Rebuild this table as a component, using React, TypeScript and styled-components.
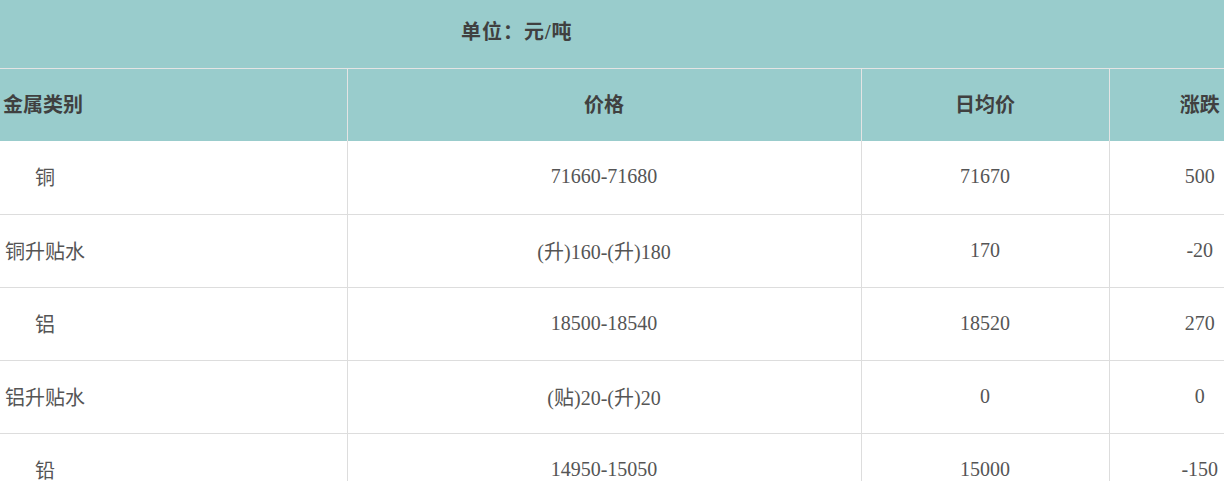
import styled, { createGlobalStyle } from "styled-components";

const GlobalStyle = createGlobalStyle`
  html, body {
    margin: 0;
    padding: 0;
    background: #ffffff;
    overflow: hidden;
  }
`;

const teal = "#99cccc";
const line = "#dddddd";

const PriceTable = styled.table`
  width: 1290px;
  table-layout: fixed;
  border-collapse: collapse;
  font-family: "Liberation Serif", "Noto Sans CJK SC", serif;
  font-size: 20px;
  color: #555555;
`;

const TitleRow = styled.tr`
  background: ${teal};
  border-bottom: 1px solid #e4e4e4;
`;

const TitleCell = styled.td`
  height: 68px;
  box-sizing: border-box;
  padding: 0 0 7px 461px;
  font-weight: bold;
  color: #404040;
  text-align: left;
  letter-spacing: 1px;
`;

const HeadRow = styled.tr`
  background: ${teal};
`;

const HeadCell = styled.th<{ $align?: "left" | "center" }>`
  height: 73px;
  box-sizing: border-box;
  padding: 0 0 2px;
  padding-left: ${(p) => (p.$align === "left" ? "3px" : "0")};
  text-align: ${(p) => p.$align ?? "center"};
  font-weight: bold;
  color: #404040;
  border-left: 1px solid #e4e4e4;

  &:first-child {
    border-left: none;
  }
`;

const BodyRow = styled.tr`
  border-bottom: 1px solid ${line};
`;

const Cell = styled.td`
  height: 73px;
  box-sizing: border-box;
  padding: 0 0 1px;
  text-align: center;
  border-left: 1px solid ${line};

  &:first-child {
    border-left: none;
  }
`;

const NameBox = styled.span`
  display: inline-block;
  width: 90px;
  text-align: center;
`;

const NameCell = styled(Cell)`
  text-align: left;
`;

const rows = [
  { name: "铜", price: "71660-71680", avg: "71670", change: "500" },
  { name: "铜升贴水", price: "(升)160-(升)180", avg: "170", change: "-20" },
  { name: "铝", price: "18500-18540", avg: "18520", change: "270" },
  { name: "铝升贴水", price: "(贴)20-(升)20", avg: "0", change: "0" },
  { name: "铅", price: "14950-15050", avg: "15000", change: "-150" },
  { name: "锌", price: "20440-20540", avg: "20490", change: "-60" },
];

export default function App() {
  return (
    <>
      <GlobalStyle />
      <PriceTable>
        <colgroup>
          <col style={{ width: 347 }} />
          <col style={{ width: 514 }} />
          <col style={{ width: 248 }} />
          <col style={{ width: 181 }} />
        </colgroup>
        <thead>
          <TitleRow>
            <TitleCell colSpan={4}>单位：元/吨</TitleCell>
          </TitleRow>
          <HeadRow>
            <HeadCell $align="left">金属类别</HeadCell>
            <HeadCell>价格</HeadCell>
            <HeadCell>日均价</HeadCell>
            <HeadCell>涨跌</HeadCell>
          </HeadRow>
        </thead>
        <tbody>
          {rows.map((r) => (
            <BodyRow key={r.name}>
              <NameCell>
                <NameBox>{r.name}</NameBox>
              </NameCell>
              <Cell>{r.price}</Cell>
              <Cell>{r.avg}</Cell>
              <Cell>{r.change}</Cell>
            </BodyRow>
          ))}
        </tbody>
      </PriceTable>
    </>
  );
}
